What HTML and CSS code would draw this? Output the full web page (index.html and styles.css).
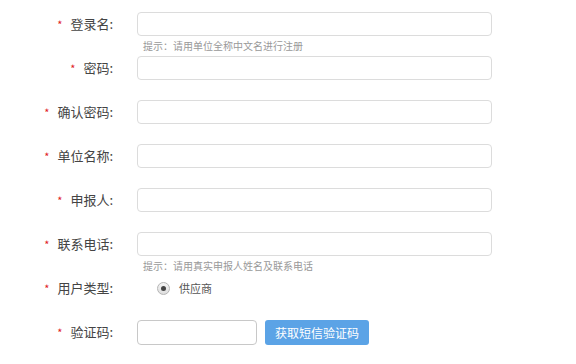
FILE: index.html
```html
<!DOCTYPE html>
<html lang="zh-CN">
<head>
  <meta charset="UTF-8">
  <title>注册</title>
  <link rel="stylesheet" href="styles.css">
</head>
<body>

<form class="reg-form">
  <div class="row">
    <label class="label"><span class="star">*</span>登录名:</label>
    <div class="field">
      <input class="ipt" type="text">
      <div class="hint">提示：请用单位全称中文名进行注册</div>
    </div>
  </div>
  <div class="row">
    <label class="label"><span class="star">*</span>密码:</label>
    <div class="field"><input class="ipt" type="password"></div>
  </div>
  <div class="row">
    <label class="label"><span class="star">*</span>确认密码:</label>
    <div class="field"><input class="ipt" type="password"></div>
  </div>
  <div class="row">
    <label class="label"><span class="star">*</span>单位名称:</label>
    <div class="field"><input class="ipt" type="text"></div>
  </div>
  <div class="row">
    <label class="label"><span class="star">*</span>申报人:</label>
    <div class="field"><input class="ipt" type="text"></div>
  </div>
  <div class="row">
    <label class="label"><span class="star">*</span>联系电话:</label>
    <div class="field">
      <input class="ipt" type="text">
      <div class="hint">提示：请用真实申报人姓名及联系电话</div>
    </div>
  </div>
  <div class="row">
    <label class="label"><span class="star">*</span>用户类型:</label>
    <div class="field radio-field">
      <span class="radio"><span class="dot"></span></span>
      <span class="radio-text">供应商</span>
    </div>
  </div>
  <div class="row">
    <label class="label"><span class="star">*</span>验证码:</label>
    <div class="field code-field">
      <input class="ipt ipt-code" type="text">
      <button class="btn" type="button">获取短信验证码</button>
    </div>
  </div>
</form>

</body>
</html>
```

FILE: styles.css
```css
body {
  margin: 0;
  background: #fff;
  font-family: "Noto Sans CJK SC", "Noto Sans", sans-serif;
  color: #444;
}

.reg-form {
  padding-top: 12px;
}

.row {
  display: flex;
  height: 44px;
}

.label {
  width: 113px;
  margin-right: 24px;
  text-align: right;
  font-size: 13px;
  line-height: 24px;
  height: 24px;
  color: #444;
}

.star {
  color: #e02020;
  font-size: 11px;
  margin-right: 8px;
}

.field {
  display: flex;
  flex-direction: column;
}

.ipt {
  box-sizing: border-box;
  width: 355px;
  height: 24px;
  margin: 0;
  border: 1px solid #dcdcdc;
  border-radius: 4px;
  outline: none;
}

.hint {
  margin-top: 3px;
  margin-left: 6px;
  font-size: 10px;
  line-height: 14px;
  color: #999;
}

.radio-field {
  flex-direction: row;
  align-items: center;
  height: 24px;
  padding-left: 20px;
}

.radio {
  box-sizing: border-box;
  width: 13px;
  height: 13px;
  border: 1px solid #b5b5b5;
  border-radius: 50%;
  background: linear-gradient(#f4f4f4, #dedede);
  display: flex;
  align-items: center;
  justify-content: center;
}

.dot {
  width: 5px;
  height: 5px;
  border-radius: 50%;
  background: #444;
}

.radio-text {
  margin-left: 9px;
  font-size: 11px;
  color: #555;
}

.code-field {
  flex-direction: row;
  gap: 8px;
}

.ipt-code {
  width: 120px;
  height: 25px;
  border-color: #c8c8c8;
}

.btn {
  width: 104px;
  height: 25px;
  border: none;
  border-radius: 3px;
  background: #5ba3e6;
  color: #fff;
  font-family: "Noto Sans CJK SC", sans-serif;
  font-size: 12px;
  padding: 0;
}
```
